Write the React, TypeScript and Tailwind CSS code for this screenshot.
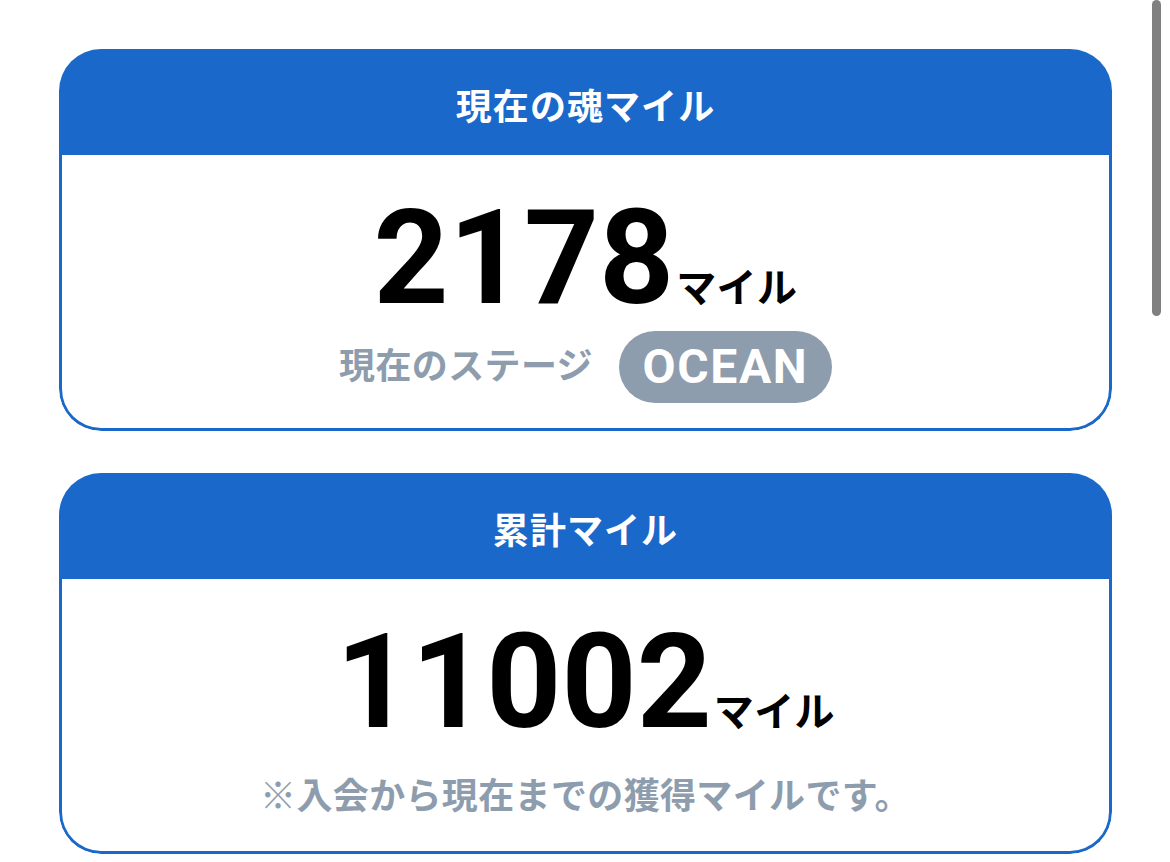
import React from "react";

const font = { fontFamily: 'Roboto, "Noto Sans CJK JP", sans-serif' };

function Card({ title, children }: { title: string; children: React.ReactNode }) {
  return (
    <div className="rounded-[42px] overflow-hidden bg-white">
      <div className="h-[106px] bg-[#1a68ca] flex items-center justify-center pt-[12px]">
        <span className="text-white font-bold text-[36px] leading-none tracking-[0.03em]">{title}</span>
      </div>
      <div className="border-[3px] border-t-0 border-[#1a68ca] rounded-b-[42px] flex flex-col items-center">
        {children}
      </div>
    </div>
  );
}

function Miles({ value }: { value: string }) {
  return (
    <div className="flex items-baseline justify-center pt-[38px]">
      <span className="text-black font-bold text-[131px] leading-none">{value}</span>
      <span className="text-black font-bold text-[40px] leading-none ml-[2px] tracking-[0.01em] relative -top-[1px]">マイル</span>
    </div>
  );
}

export default function App() {
  return (
    <div className="relative min-h-[862px] bg-white" style={font}>
      <div className="pl-[59px] pr-[58px] pt-[49px] flex flex-col gap-[42px]">
        <Card title="現在の魂マイル">
          <Miles value="2178" />
          <div className="flex items-center mt-[7px] mb-[25px]">
            <span className="text-[#8e9dad] font-bold text-[36px] leading-none tracking-[0.01em]">現在のステージ</span>
            <span className="ml-[26px] h-[72px] w-[213px] rounded-full bg-[#8e9dad] flex items-center justify-center text-white font-bold text-[48px] leading-none tracking-[0.035em]">
              OCEAN
            </span>
          </div>
        </Card>
        <Card title="累計マイル">
          <Miles value="11002" />
          <div className="mt-[22px] mb-[27px] text-[#8e9dad] font-bold text-[36px] leading-[54px] tracking-[0.01em]">
            ※入会から現在までの獲得マイルです。
          </div>
        </Card>
      </div>
      <div className="absolute right-[9px] top-0 w-[9px] h-[316px] rounded-full bg-[#808080]" />
    </div>
  );
}
